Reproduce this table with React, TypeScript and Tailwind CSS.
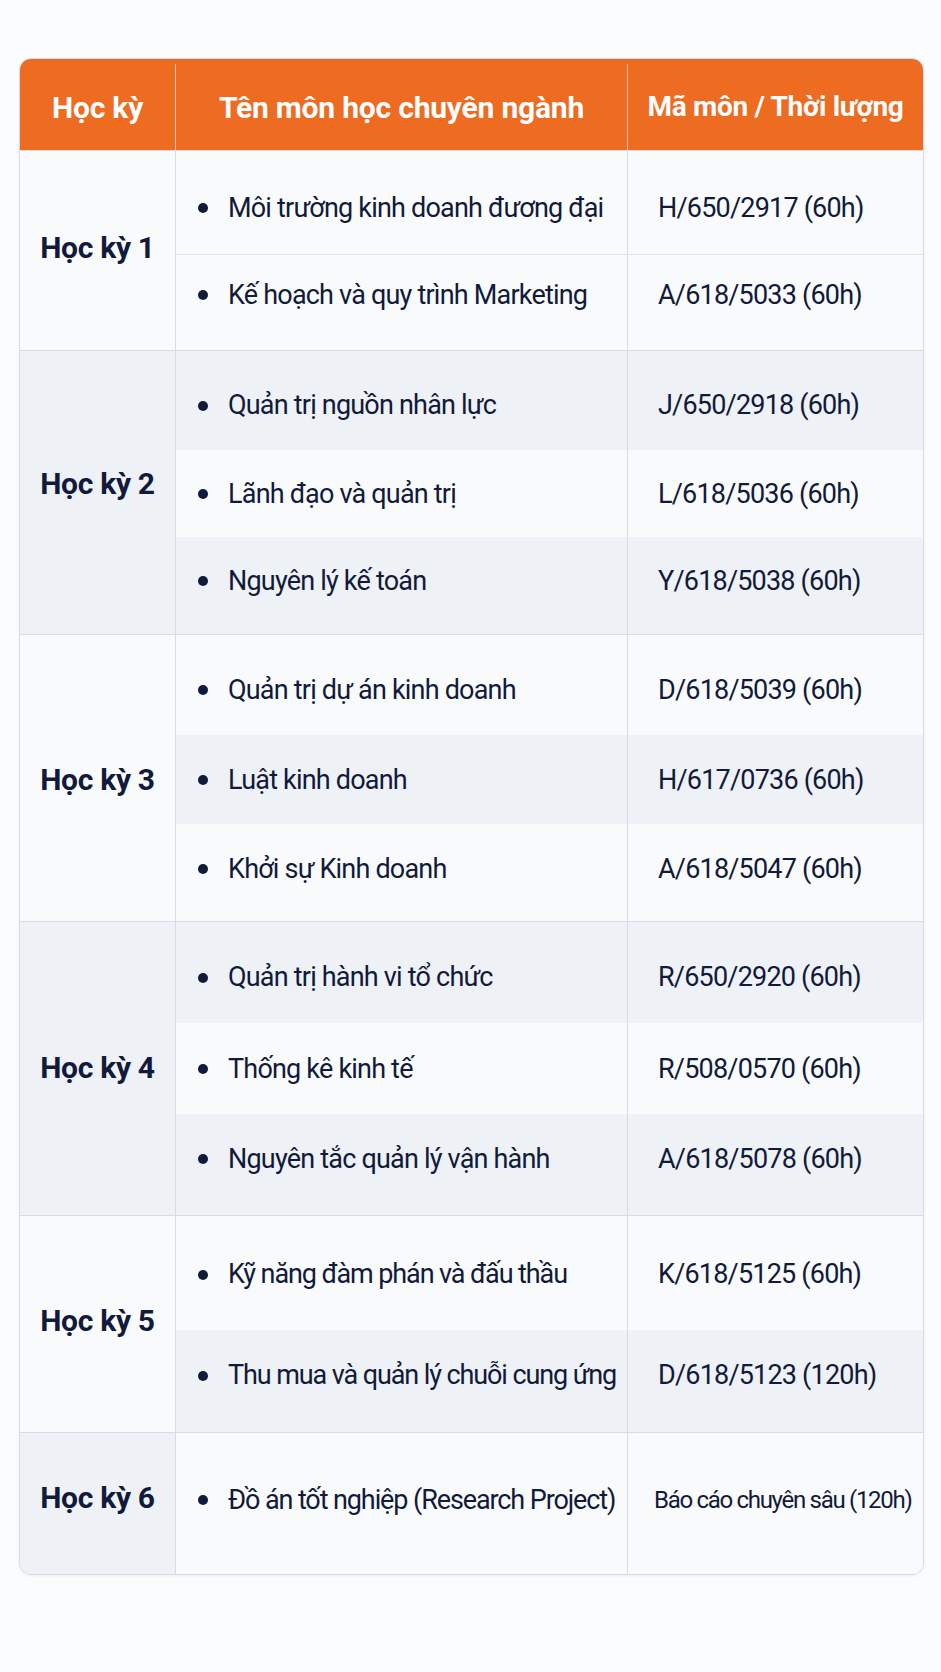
import React from "react"

type Sub = { name: string; code: string; h: number; gray: boolean; pad: string }
type Sem = { label: string; gray: boolean; pad: string; lines?: boolean; tight?: boolean; subs: Sub[] }

const semesters: Sem[] = [
  {
    label: "Học kỳ 1",
    gray: false,
    pad: "pb-[7px]",
    lines: true,
    subs: [
      { name: "Môi trường kinh doanh đương đại", code: "H/650/2917 (60h)", h: 103, gray: false, pad: "pt-[11px]" },
      { name: "Kế hoạch và quy trình Marketing", code: "A/618/5033 (60h)", h: 96, gray: false, pad: "pb-[15px]" },
    ],
  },
  {
    label: "Học kỳ 2",
    gray: true,
    pad: "pb-[19px]",
    subs: [
      { name: "Quản trị nguồn nhân lực", code: "J/650/2918 (60h)", h: 99, gray: true, pad: "pt-[10px]" },
      { name: "Lãnh đạo và quản trị", code: "L/618/5036 (60h)", h: 87, gray: false, pad: "pt-[1px]" },
      { name: "Nguyên lý kế toán", code: "Y/618/5038 (60h)", h: 97, gray: true, pad: "pb-[9px]" },
    ],
  },
  {
    label: "Học kỳ 3",
    gray: false,
    pad: "pt-[3px]",
    subs: [
      { name: "Quản trị dự án kinh doanh", code: "D/618/5039 (60h)", h: 100, gray: false, pad: "pt-[10px]" },
      { name: "Luật kinh doanh", code: "H/617/0736 (60h)", h: 89, gray: true, pad: "pt-[1px]" },
      { name: "Khởi sự Kinh doanh", code: "A/618/5047 (60h)", h: 97, gray: false, pad: "pb-[7px]" },
    ],
  },
  {
    label: "Học kỳ 4",
    gray: true,
    pad: "pb-[2px]",
    subs: [
      { name: "Quản trị hành vi tổ chức", code: "R/650/2920 (60h)", h: 101, gray: true, pad: "pt-[10px]" },
      { name: "Thống kê kinh tế", code: "R/508/0570 (60h)", h: 91, gray: false, pad: "pt-[1px]" },
      { name: "Nguyên tắc quản lý vận hành", code: "A/618/5078 (60h)", h: 101, gray: true, pad: "pb-[11px]" },
    ],
  },
  {
    label: "Học kỳ 5",
    gray: false,
    pad: "pb-[7px]",
    tight: true,
    subs: [
      { name: "Kỹ năng đàm phán và đấu thầu", code: "K/618/5125 (60h)", h: 114, gray: false, pad: "pt-[3px]" },
      { name: "Thu mua và quản lý chuỗi cung ứng", code: "D/618/5123 (120h)", h: 102, gray: true, pad: "pb-[11px]" },
    ],
  },
  {
    label: "Học kỳ 6",
    gray: true,
    pad: "pb-[12px]",
    tight: true,
    subs: [
      { name: "Đồ án tốt nghiệp (Research Project)", code: "Báo cáo chuyên sâu (120h)", h: 141, gray: false, pad: "pb-[7px]" },
    ],
  },
]

export default function App() {
  return (
    <div
      className="min-h-[1672px] w-[941px] bg-[#fbfcfd] pt-[58px] text-[#111a3a]"
      style={{ fontFamily: "Roboto, 'Noto Sans', sans-serif" }}
    >
      <div className="ml-[19px] w-[905px] overflow-hidden rounded-[12px] border border-[#d5dce7] bg-[#f9fafc] shadow-[0_1px_3px_rgba(15,23,42,0.06)]">
        {/* header */}
        <div className="flex h-[91px] bg-[#ee6b22] pt-[5px] font-bold text-white">
          <div className="flex w-[156px] items-center justify-center border-r border-[#f5cdb6] text-[30px] tracking-[-0.2px]">
            Học kỳ
          </div>
          <div className="flex w-[452px] items-center justify-center border-r border-[#f5cdb6] text-[30px] tracking-[-0.2px]">
            Tên môn học chuyên ngành
          </div>
          <div className="flex flex-1 items-center justify-center text-[28px] tracking-[-0.3px]">
            Mã môn / Thời lượng
          </div>
        </div>

        {semesters.map((sem) => (
          <div key={sem.label} className="flex border-t border-[#d5dce7]">
            <div
              className={
                "flex w-[156px] items-center justify-center border-r border-[#d5dce7] text-[30px] font-bold tracking-[-0.3px] " +
                sem.pad +
                (sem.gray ? " bg-[#eef1f5]" : " bg-[#f9fafc]")
              }
            >
              {sem.label}
            </div>
            <div className="flex flex-1 flex-col">
              {sem.subs.map((s, i) => (
                <div
                  key={s.code}
                  className={
                    "flex " +
                    (s.gray ? "bg-[#eef1f5] " : "bg-[#f9fafc] ") +
                    (sem.lines && i > 0 ? "border-t border-[#dfe4ec]" : "")
                  }
                  style={{ height: s.h }}
                >
                  <div
                    className={
                      "flex w-[452px] items-center border-r border-[#d5dce7] pl-[22px] text-[27px] " +
                      s.pad +
                      (sem.tight ? " tracking-[-1.1px]" : " tracking-[-0.8px]")
                    }
                  >
                    <span className="mr-[20px] h-[10px] w-[10px] shrink-0 rounded-full bg-[#111a3a]" />
                    <span>{s.name}</span>
                  </div>
                  <div
                    className={
                      "flex flex-1 items-center " +
                      s.pad +
                      (s.code.length > 20
                        ? " pl-[26px] text-[24px] tracking-[-1.3px]"
                        : " pl-[30px] text-[27px] tracking-[-0.8px]")
                    }
                  >
                    {s.code}
                  </div>
                </div>
              ))}
            </div>
          </div>
        ))}
      </div>
    </div>
  )
}
